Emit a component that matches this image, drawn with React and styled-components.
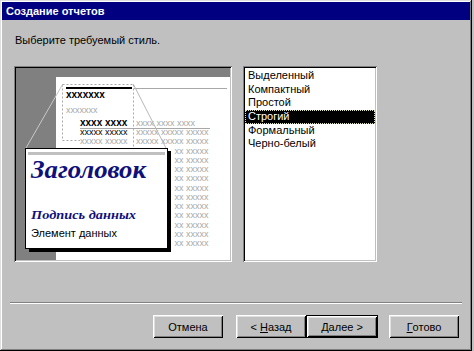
import React from "react";
import styled, { createGlobalStyle, css } from "styled-components";

const Global = createGlobalStyle`
  html, body { margin: 0; padding: 0; background: #c0c0c0; }
  body { font-family: "Liberation Sans", Arial, sans-serif; font-size: 11px; }
`;

const sunken = css`
  box-shadow: inset 1px 1px #808080, inset -1px -1px #ffffff,
    inset 2px 2px #000000, inset -2px -2px #c0c0c0;
`;

const Window = styled.div`
  box-sizing: border-box;
  width: 472px;
  height: 351px;
  padding: 2px;
  background: #c0c0c0;
  box-shadow: inset -1px -1px #000000, inset 1px 1px #dfdfdf,
    inset -2px -2px #808080, inset 2px 2px #ffffff;
  display: flex;
  flex-direction: column;
`;

const TitleBar = styled.div`
  height: 18px;
  line-height: 18px;
  background: #000080;
  color: #ffffff;
  font-weight: bold;
  font-size: 11px;
  padding-left: 4px;
`;

const Prompt = styled.div`
  margin-top: 14px;
  padding-left: 13px;
  line-height: 13px;
  color: #000;
`;

const PanelsRow = styled.div`
  margin-top: 19px;
  padding-left: 12px;
  display: flex;
  gap: 11px;
`;

const Preview = styled.div`
  box-sizing: border-box;
  width: 218px;
  height: 196px;
  padding: 2px;
  ${sunken}
  background: #808080;
  svg { display: block; }
`;

const ListBox = styled.div`
  box-sizing: border-box;
  width: 134px;
  height: 196px;
  padding: 3px 2px 2px 2px;
  ${sunken}
  background: #ffffff;
  display: flex;
  flex-direction: column;
`;

const ListItem = styled.div`
  box-sizing: border-box;
  height: 13.7px;
  line-height: 13.7px;
  padding-left: 3px;
  white-space: nowrap;
  color: ${(p) => (p.$selected ? "#ffffff" : "#000000")};
  background: ${(p) => (p.$selected ? "#000000" : "transparent")};
  outline: ${(p) => (p.$selected ? "1px dotted #e0e0c0" : "none")};
  outline-offset: -1px;
`;

const Separator = styled.div`
  margin-top: 40px;
  margin-left: 8px;
  width: 452px;
  height: 2px;
  border-top: 1px solid #808080;
  border-bottom: 1px solid #ffffff;
  box-sizing: border-box;
`;

const ButtonRow = styled.div`
  margin-top: 11px;
  display: flex;
  justify-content: flex-end;
  padding-right: 11px;
`;

const ButtonGroup = styled.div`
  display: flex;
  margin-left: ${(p) => p.$gap || 0}px;
`;

const Button = styled.div`
  box-sizing: border-box;
  width: ${(p) => (p.$default ? 72 : 70)}px;
  height: 23px;
  display: flex;
  align-items: center;
  justify-content: center;
  color: #000;
  background: #c0c0c0;
  font-size: 11px;
  ${(p) =>
    p.$default
      ? css`
          box-shadow: inset 1px 1px #000, inset -1px -1px #000,
            inset 2px 2px #ffffff, inset -2px -2px #000000,
            inset 3px 3px #dfdfdf, inset -3px -3px #808080;
        `
      : css`
          box-shadow: inset 1px 1px #ffffff, inset -1px -1px #000000,
            inset 2px 2px #dfdfdf, inset -2px -2px #808080;
        `}
  u { text-decoration: underline; }
`;

const styles = ["Выделенный", "Компактный", "Простой", "Строгий", "Формальный", "Черно-белый"];

const GRAY = "#a8a8a8";

function PreviewDrawing() {
  const rows = [];
  for (let i = 0; i < 12; i++) {
    const y = 144.25 + i * 9.25;
    const covered = y > 147;
    rows.push(
      <g key={i}>
        {!covered && <text x="80" y={y} fontSize="9" fill={GRAY}>xxxxx xxxxx</text>}
        {covered ? (
          <text x="174.5" y={y} fontSize="9" fill={GRAY}>xx xxxxx</text>
        ) : (
          <text x="136" y={y} fontSize="9" fill={GRAY}>xxxxx xxxxx xxxxx</text>
        )}
      </g>
    );
  }
  return (
    <svg width="214" height="192" viewBox="16 68 214 192" fontFamily="Liberation Sans, Arial, sans-serif">
      <rect x="16" y="68" width="214" height="192" fill="#808080" />
      <rect x="56" y="77" width="174" height="183" fill="#ffffff" />
      <line x1="134" y1="88.5" x2="227" y2="88.5" stroke={GRAY} />
      <rect x="66" y="87" width="66" height="2" fill="#000" />
      <text x="66" y="98" fontSize="10" fontWeight="bold" fill="#000">xxxxxxx</text>
      <text x="66" y="113" fontSize="9" fill={GRAY}>xxxxxxx</text>
      <text x="80" y="126" fontSize="10" fontWeight="bold" fill="#000">xxxx xxxx</text>
      <text x="136" y="126" fontSize="9" fill={GRAY}>xxxx xxxx xxxx</text>
      <line x1="80" y1="128.5" x2="210" y2="128.5" stroke={GRAY} />
      <text x="80" y="135" fontSize="9" fill="#000">xxxxx xxxxx</text>
      <text x="136" y="135" fontSize="9" fill={GRAY}>xxxxx xxxxx xxxxx</text>
      {rows}
      <g stroke={GRAY} strokeDasharray="2 2" fill="none">
        <line x1="62.5" y1="84.5" x2="133.5" y2="84.5" />
        <line x1="62.5" y1="84.5" x2="62.5" y2="140.5" />
        <line x1="62.5" y1="140.5" x2="80" y2="140.5" />
        <line x1="133.5" y1="84.5" x2="133.5" y2="148" />
      </g>
      <line x1="62.5" y1="84.5" x2="26" y2="148" stroke="#c8c8c8" />
      <line x1="133.5" y1="84.5" x2="166" y2="148" stroke="#b8b8b8" />
      <rect x="29" y="151" width="142" height="101" fill="#000" />
      <rect x="25.5" y="148.5" width="142" height="100" fill="#fff" stroke="#000" />
      <rect x="28" y="152" width="137" height="3" fill="#c0c0c0" />
      <text x="31" y="178" fontFamily="Liberation Serif, serif" fontStyle="italic" fontWeight="bold" fontSize="25" fill="#10107a" textLength="115" lengthAdjust="spacingAndGlyphs">Заголовок</text>
      <text x="31" y="219" fontFamily="Liberation Serif, serif" fontStyle="italic" fontWeight="bold" fontSize="13" fill="#10107a" textLength="105" lengthAdjust="spacingAndGlyphs">Подпись данных</text>
      <text x="31" y="237" fontSize="11" fill="#000">Элемент данных</text>
    </svg>
  );
}

export default function App() {
  return (
    <>
      <Global />
      <Window>
        <TitleBar>Создание отчетов</TitleBar>
        <Prompt>Выберите требуемый стиль.</Prompt>
        <PanelsRow>
          <Preview>
            <PreviewDrawing />
          </Preview>
          <ListBox>
            {styles.map((s) => (
              <ListItem key={s} $selected={s === "Строгий"}>{s}</ListItem>
            ))}
          </ListBox>
        </PanelsRow>
        <Separator />
        <ButtonRow>
          <ButtonGroup>
            <Button>Отмена</Button>
          </ButtonGroup>
          <ButtonGroup $gap={13}>
            <Button>&lt;&nbsp;<u>Н</u>азад</Button>
            <Button $default><u>Д</u>алее&nbsp;&gt;</Button>
          </ButtonGroup>
          <ButtonGroup $gap={11}>
            <Button><u>Г</u>отово</Button>
          </ButtonGroup>
        </ButtonRow>
      </Window>
    </>
  );
}
